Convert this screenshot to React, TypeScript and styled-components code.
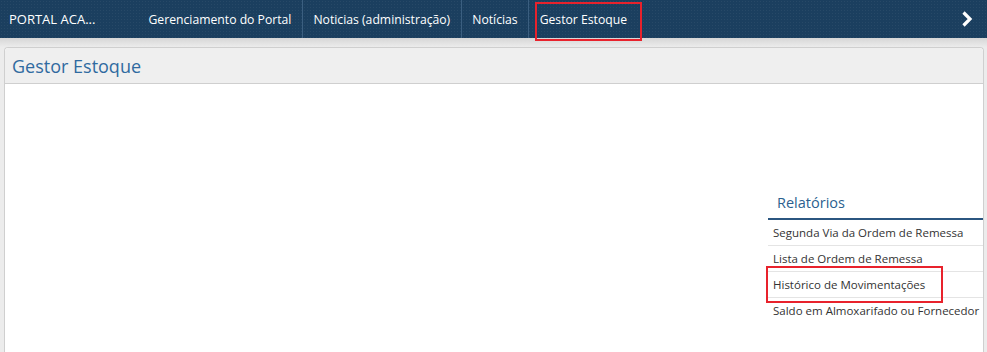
import React from "react";
import styled, { createGlobalStyle } from "styled-components";

const GlobalStyle = createGlobalStyle`
  html, body { margin: 0; padding: 0; }
  body {
    background: #ececec;
    font-family: "Open Sans", "Noto Sans", "Liberation Sans", sans-serif;
    overflow: hidden;
  }
  #root { height: 352px; display: flex; flex-direction: column; }
`;

const Navbar = styled.nav`
  height: 38px;
  flex: none;
  display: flex;
  align-items: stretch;
  background-color: #1b3f5f;
  background-image: radial-gradient(rgba(255,255,255,0.05) 1px, transparent 1px);
  background-size: 3px 3px;
  color: #fff;
`;

const Brand = styled.a`
  display: flex;
  align-items: center;
  padding-left: 9px;
  width: 129px;
  font-size: 13px;
  color: #fff;
  white-space: nowrap;
`;

const NavItem = styled.a<{ $sep?: boolean }>`
  position: relative;
  display: flex;
  align-items: center;
  padding: 0 10.5px;
  font-size: 12.2px;
  color: #fff;
  white-space: nowrap;
  border-right: ${(p) => (p.$sep ? "1px solid #3b5f80" : "none")};
`;

const Marker = styled.span<{ $t: number; $l: number; $r: number; $b: number }>`
  position: absolute;
  top: ${(p) => p.$t}px;
  left: ${(p) => p.$l}px;
  right: ${(p) => p.$r}px;
  bottom: ${(p) => p.$b}px;
  border: 2.5px solid #e8222c;
  pointer-events: none;
`;

const Spacer = styled.div`
  flex: 1;
`;

const Chevron = styled.div`
  display: flex;
  align-items: center;
  padding-right: 14px;
`;

const Strip = styled.div`
  height: 9px;
  flex: none;
  background: linear-gradient(#d6d6d6, #ececec);
`;

const Panel = styled.section`
  flex: 1;
  margin: 0 3px 0 4px;
  border: 1px solid #cfcfcf;
  border-bottom: none;
  border-radius: 4px 4px 0 0;
  background: #fff;
  display: flex;
  flex-direction: column;
`;

const PanelHeader = styled.header`
  height: 35px;
  display: flex;
  align-items: center;
  padding-left: 7px;
  background: #efefef;
  border-bottom: 1px solid #cfcfcf;
  border-radius: 4px 4px 0 0;
`;

const PanelTitle = styled.h1`
  margin: 0;
  font-weight: 400;
  font-size: 18px;
  color: #2f6aa0;
`;

const PanelBody = styled.div`
  flex: 1;
  display: flex;
  justify-content: flex-end;
  padding-top: 102px;
`;

const Reports = styled.div`
  width: 215px;
`;

const ReportsTitle = styled.h2`
  margin: 0;
  height: 32px;
  padding-left: 9px;
  display: flex;
  align-items: center;
  font-weight: 400;
  font-size: 14.5px;
  color: #2c5f8f;
  border-bottom: 2px solid #2b5680;
`;

const ReportList = styled.ul`
  list-style: none;
  margin: 0;
  padding: 0;
`;

const ReportItem = styled.li<{ $last?: boolean }>`
  position: relative;
  height: 25px;
  display: flex;
  align-items: center;
  padding-left: 5px;
  font-size: 11.5px;
  color: #333;
  white-space: nowrap;
  border-bottom: ${(p) => (p.$last ? "none" : "1px solid #e4e4e4")};
`;

const items = [
  "Segunda Via da Ordem de Remessa",
  "Lista de Ordem de Remessa",
  "Histórico de Movimentações",
  "Saldo em Almoxarifado ou Fornecedor",
];

export default function App() {
  return (
    <>
      <GlobalStyle />
      <Navbar>
        <Brand>PORTAL ACA...</Brand>
        <NavItem $sep>Gerenciamento do Portal</NavItem>
        <NavItem $sep>Noticias (administração)</NavItem>
        <NavItem $sep>Notícias</NavItem>
        <NavItem>
          Gestor Estoque
          <Marker $t={2} $l={6} $r={-4} $b={-3} />
        </NavItem>
        <Spacer />
        <Chevron>
          <svg width="12" height="18" viewBox="0 0 12 18">
            <path d="M2.5 2.5 L9 9 L2.5 15.5" fill="none" stroke="#fff" strokeWidth="3.2" />
          </svg>
        </Chevron>
      </Navbar>
      <Strip />
      <Panel>
        <PanelHeader>
          <PanelTitle>Gestor Estoque</PanelTitle>
        </PanelHeader>
        <PanelBody>
          <Reports>
            <ReportsTitle>Relatórios</ReportsTitle>
            <ReportList>
              {items.map((t, i) => (
                <ReportItem key={t} $last={i === items.length - 1}>
                  {t}
                  {i === 2 && <Marker $t={-6} $l={-2} $r={40} $b={-6} />}
                </ReportItem>
              ))}
            </ReportList>
          </Reports>
        </PanelBody>
      </Panel>
    </>
  );
}
